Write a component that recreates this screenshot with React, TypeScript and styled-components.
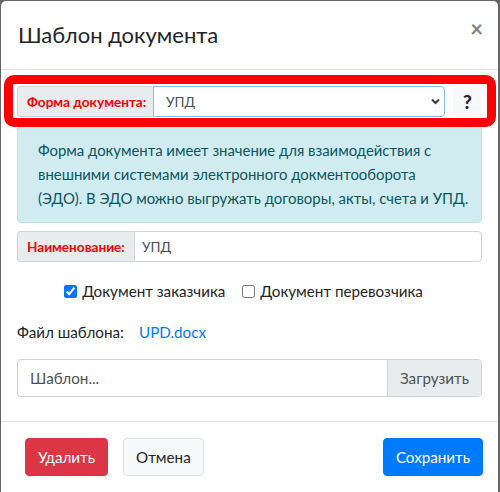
import React from "react";
import styled, { createGlobalStyle } from "styled-components";

const FONT = `Lato, "Noto Sans", "Liberation Sans", sans-serif`;

const GlobalStyle = createGlobalStyle`
  html, body {
    margin: 0;
    padding: 0;
    background: #666666;
    height: 492px;
    overflow: hidden;
  }
  body {
    font-family: ${FONT};
    color: #212529;
  }
  * { box-sizing: border-box; }
`;

const Modal = styled.div`
  margin: 1px 2px 0 1px;
  background: #ffffff;
  border-radius: 5px 5px 0 0;
  height: 500px;
  display: flex;
  flex-direction: column;
`;

const Header = styled.div`
  display: flex;
  align-items: flex-start;
  justify-content: space-between;
  padding: 16px 16px 16px 17px;
  border-bottom: 1px solid #dee2e6;
`;

const Title = styled.h5`
  margin: 0;
  font-size: 22px;
  line-height: 36px;
  font-weight: 400;
  color: #212529;
`;

const Close = styled.button`
  border: 0;
  background: transparent;
  padding: 0;
  margin: 0 -1px 0 0;
  font-family: ${FONT};
  font-size: 22px;
  font-weight: 700;
  line-height: 24px;
  color: #000;
  opacity: 0.5;
`;

const Body = styled.div`
  padding: 16px;
  display: flex;
  flex-direction: column;
`;

const FieldRow = styled.div`
  position: relative;
  display: flex;
  gap: 8px;
  height: 31px;
  margin-bottom: 8px;
`;

const Highlight = styled.div`
  position: absolute;
  top: -11px;
  left: -13px;
  right: -14px;
  bottom: -10px;
  border: 9px solid #ff0000;
  border-radius: 10px;
  pointer-events: none;
`;

const InputGroup = styled.div`
  display: flex;
  height: 31px;
  flex: 0 0 31px;
`;

const RowGroup = styled(InputGroup)`
  flex: 1 1 auto;
`;

const Addon = styled.label<{ $w: number }>`
  flex: 0 0 ${(p) => p.$w}px;
  display: flex;
  align-items: center;
  padding: 0 9px;
  background: #e9ecef;
  border: 1px solid #ced4da;
  border-right: 0;
  border-radius: 4px 0 0 4px;
  color: #ff0000;
  font-size: 13.6px;
  font-weight: 700;
  white-space: nowrap;
  overflow: hidden;
`;

const SelectWrap = styled.div`
  position: relative;
  flex: 1;
  display: flex;
`;

const Select = styled.select`
  appearance: none;
  flex: 1;
  border: 1px solid #80bdff;
  border-radius: 0 4px 4px 0;
  background: #fff;
  padding: 0 24px 0 12px;
  font-family: ${FONT};
  font-size: 13.6px;
  color: #495057;
  outline: none;
`;

const Chevron = styled.svg`
  position: absolute;
  right: 5px;
  top: 12px;
  pointer-events: none;
`;

const TextInput = styled.input`
  flex: 1;
  min-width: 0;
  border: 1px solid #ced4da;
  border-radius: 0 4px 4px 0;
  padding: 0 7px;
  font-family: ${FONT};
  font-size: 13.6px;
  color: #495057;
  outline: none;
`;

const HelpButton = styled.button`
  flex: 0 0 29px;
  border: 0;
  border-radius: 4px;
  background: #f8f9fa;
  color: #212529;
  font-family: ${FONT};
  font-size: 19px;
  font-weight: 900;
  padding: 0;
  line-height: 31px;
`;

const Alert = styled.div`
  background: #d1ecf1;
  border: 1px solid #bee5eb;
  border-radius: 4px;
  color: #0c5460;
  padding: 12px 20px;
  font-size: 14.9px;
  line-height: 24px;
  margin-bottom: 8px;
  white-space: nowrap;
`;

const CheckRow = styled.div`
  display: flex;
  justify-content: center;
  gap: 17px;
  padding-right: 12px;
  height: 24px;
  align-items: center;
  margin: 17px 0 17px;
`;

const CheckItem = styled.label`
  display: flex;
  align-items: center;
  font-size: 15.2px;
  color: #212529;
`;

const CheckBox = styled.input`
  width: 13px;
  height: 13px;
  margin: 0 5px 0 0;
  accent-color: #0075ff;
`;

const FileRow = styled.div`
  display: flex;
  align-items: center;
  height: 24px;
  font-size: 15.2px;
  margin-bottom: 15px;
`;

const FileLabel = styled.span`
  flex: 0 0 122px;
  color: #212529;
`;

const FileLink = styled.a`
  color: #007bff;
  text-decoration: none;
`;

const FileInput = styled.div`
  display: flex;
  height: 38px;
  border: 1px solid #ced4da;
  border-radius: 4px;
  overflow: hidden;
  margin-bottom: 8px;
`;

const FilePlaceholder = styled.span`
  flex: 1;
  display: flex;
  align-items: center;
  padding: 0 12px;
  font-size: 15.2px;
  color: #495057;
`;

const FileButton = styled.span`
  display: flex;
  align-items: center;
  padding: 0 12px;
  background: #e9ecef;
  border-left: 1px solid #ced4da;
  font-size: 15.2px;
  color: #495057;
`;

const Footer = styled.div`
  display: flex;
  align-items: center;
  gap: 15px;
  padding: 16px 15px 16px 24px;
  border-top: 1px solid #dee2e6;
`;

const Spacer = styled.div`
  flex: 1;
`;

const Btn = styled.button<{ $variant: "danger" | "light" | "primary" }>`
  height: 38px;
  padding: 0 12px;
  border-radius: 4px;
  font-family: ${FONT};
  font-size: 15.2px;
  border: 1px solid
    ${(p) =>
      p.$variant === "danger" ? "#dc3545" : p.$variant === "primary" ? "#007bff" : "#dee2e6"};
  background: ${(p) =>
    p.$variant === "danger" ? "#dc3545" : p.$variant === "primary" ? "#007bff" : "#f8f9fa"};
  color: ${(p) => (p.$variant === "light" ? "#212529" : "#ffffff")};
`;

export default function App() {
  return (
    <>
      <GlobalStyle />
      <Modal>
        <Header>
          <Title>Шаблон документа</Title>
          <Close aria-label="Закрыть">×</Close>
        </Header>
        <Body>
          <FieldRow>
            <RowGroup>
              <Addon $w={136}>Форма документа:</Addon>
              <SelectWrap>
                <Select defaultValue="upd">
                  <option value="upd">УПД</option>
                </Select>
                <Chevron width="9" height="7" viewBox="0 0 9 7">
                  <path d="M1 1.5 L4.5 5 L8 1.5" fill="none" stroke="#343a40" strokeWidth="2" />
                </Chevron>
              </SelectWrap>
            </RowGroup>
            <HelpButton>?</HelpButton>
            <Highlight />
          </FieldRow>
          <Alert>
            Форма документа имеет значение для взаимодействия с<br />
            внешними системами электронного докментооборота<br />
            (ЭДО). В ЭДО можно выгружать договоры, акты, счета и УПД.
          </Alert>
          <InputGroup>
            <Addon $w={117}>Наименование:</Addon>
            <TextInput defaultValue="УПД" />
          </InputGroup>
          <CheckRow>
            <CheckItem>
              <CheckBox type="checkbox" defaultChecked />
              Документ заказчика
            </CheckItem>
            <CheckItem>
              <CheckBox type="checkbox" />
              Документ перевозчика
            </CheckItem>
          </CheckRow>
          <FileRow>
            <FileLabel>Файл шаблона:</FileLabel>
            <FileLink href="#">UPD.docx</FileLink>
          </FileRow>
          <FileInput>
            <FilePlaceholder>Шаблон...</FilePlaceholder>
            <FileButton>Загрузить</FileButton>
          </FileInput>
        </Body>
        <Footer>
          <Btn $variant="danger">Удалить</Btn>
          <Btn $variant="light">Отмена</Btn>
          <Spacer />
          <Btn $variant="primary">Сохранить</Btn>
        </Footer>
      </Modal>
    </>
  );
}
